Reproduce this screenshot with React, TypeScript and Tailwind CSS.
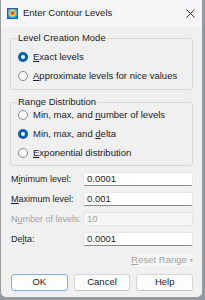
import React from 'react';

const font = { fontFamily: '"Liberation Sans", Arial, sans-serif' };

function AppIcon() {
  return (
    <svg width="11" height="11" viewBox="0 0 11 11">
      <defs>
        <radialGradient id="ct" cx="50%" cy="45%" r="60%">
          <stop offset="0%" stopColor="#e0202a" />
          <stop offset="25%" stopColor="#f07a1a" />
          <stop offset="45%" stopColor="#f5d23a" />
          <stop offset="65%" stopColor="#46c7e8" />
          <stop offset="100%" stopColor="#1f6fc4" />
        </radialGradient>
      </defs>
      <rect x="0.5" y="0.5" width="10" height="10" fill="url(#ct)" stroke="#1c5fae" />
    </svg>
  );
}

function Radio({ checked, children }: { checked?: boolean; children: React.ReactNode }) {
  return (
    <div className="flex items-center h-[19px]">
      {checked ? (
        <span className="w-[10px] h-[10px] rounded-full bg-[#005fb8] flex items-center justify-center">
          <span className="w-[4px] h-[4px] rounded-full bg-white" />
        </span>
      ) : (
        <span className="w-[10px] h-[10px] rounded-full bg-[#fbfbfb] border border-[#8a8a8a]" />
      )}
      <span className="ml-[5px] text-[9.5px] text-[#1b1b1b] leading-none whitespace-nowrap">{children}</span>
    </div>
  );
}

function Field({
  label,
  value,
  disabled,
}: {
  label: React.ReactNode;
  value: string;
  disabled?: boolean;
}) {
  return (
    <div className="flex items-center h-[14px]">
      <span
        className={`w-[72px] text-[9px] leading-none whitespace-nowrap ${
          disabled ? 'text-[#a3a3a3]' : 'text-[#1b1b1b]'
        }`}
      >
        {label}
      </span>
      <div
        className={`flex-1 h-[14px] rounded-[2px] border flex items-center pl-[3px] text-[9.5px] leading-none ${
          disabled
            ? 'bg-[#f6f6f6] border-[#e3e3e3] text-[#a3a3a3]'
            : 'bg-white border-[#e6e6e6] border-b-[#8a8a8a] text-[#1b1b1b]'
        }`}
      >
        {value}
      </div>
    </div>
  );
}

function Btn({ children, primary }: { children: React.ReactNode; primary?: boolean }) {
  return (
    <div
      className={`flex-1 h-[17px] rounded-[3px] border flex items-center justify-center text-[9.5px] text-[#1b1b1b] bg-[#fdfdfd] ${
        primary ? 'border-[#7fb0e0]' : 'border-[#d6d6d6] border-b-[#c2c2c2]'
      }`}
    >
      {children}
    </div>
  );
}

export default function App() {
  return (
    <div className="w-[205px] h-[300px] bg-[#8f9aa6] overflow-hidden" style={font}>
      <div className="w-[203px] h-[298px] bg-[#f0f0f0] border-r border-b border-l border-[#9c9c9c] rounded-b-[6px] flex flex-col">
        {/* Title bar */}
        <div className="h-[27px] bg-[#f4f6f8] flex items-center pl-[6px] pr-[7px] shrink-0">
          <AppIcon />
          <span className="ml-[5px] text-[9.5px] text-[#1b1b1b]">Enter Contour Levels</span>
          <svg className="ml-auto" width="9" height="9" viewBox="0 0 9 9">
            <path d="M0.5 0.5 L8.5 8.5 M8.5 0.5 L0.5 8.5" stroke="#303030" strokeWidth="1" />
          </svg>
        </div>

        <div className="flex flex-col px-[9px]">
          {/* Level Creation Mode */}
          <fieldset className="mt-[6px] h-[57px] border border-[#d8d8d8] rounded-[3px] px-[6px]">
            <legend className="px-[1px] text-[9.5px] text-[#1b1b1b] leading-[10px]">Level Creation Mode</legend>
            <div className="flex flex-col pt-[4px] pl-[1px]">
              <Radio checked>
                <u>E</u>xact levels
              </Radio>
              <Radio>
                <u>A</u>pproximate levels for nice values
              </Radio>
            </div>
          </fieldset>

          {/* Range Distribution */}
          <fieldset className="mt-[7px] h-[69px] border border-[#d8d8d8] rounded-[3px] px-[6px]">
            <legend className="px-[1px] text-[9.5px] text-[#1b1b1b] leading-[10px]">Range Distribution</legend>
            <div className="flex flex-col -mt-[2px] pl-[1px]">
              <Radio>
                Min, max, and <u>n</u>umber of levels
              </Radio>
              <Radio checked>
                Min, max, and <u>d</u>elta
              </Radio>
              <Radio>
                <u>E</u>xponential distribution
              </Radio>
            </div>
          </fieldset>

          {/* Fields */}
          <div className="mt-[6px] flex flex-col gap-[6px] pl-[1px]">
            <Field
              label={
                <>
                  M<u>i</u>nimum level:
                </>
              }
              value="0.0001"
            />
            <Field
              label={
                <>
                  <u>M</u>aximum level:
                </>
              }
              value="0.001"
            />
            <Field
              label={
                <>
                  N<u>u</u>mber of levels:
                </>
              }
              value="10"
              disabled
            />
            <Field
              label={
                <>
                  De<u>l</u>ta:
                </>
              }
              value="0.0001"
            />
          </div>

          <div className="mt-[6px] flex justify-end">
            <div className="w-[61px] h-[16px] bg-[#f5f5f5] border border-[#ececec] rounded-[3px] flex items-center justify-center text-[9.5px] text-[#a3a3a3] whitespace-nowrap">
              <span>
                <u>R</u>eset Range
              </span>
              <span className="ml-[2px] text-[5px] leading-none">▼</span>
            </div>
          </div>

          <div className="mt-[6px] flex gap-[6px] pl-[1px]">
            <Btn primary>OK</Btn>
            <Btn>Cancel</Btn>
            <Btn>Help</Btn>
          </div>
        </div>
      </div>
    </div>
  );
}
